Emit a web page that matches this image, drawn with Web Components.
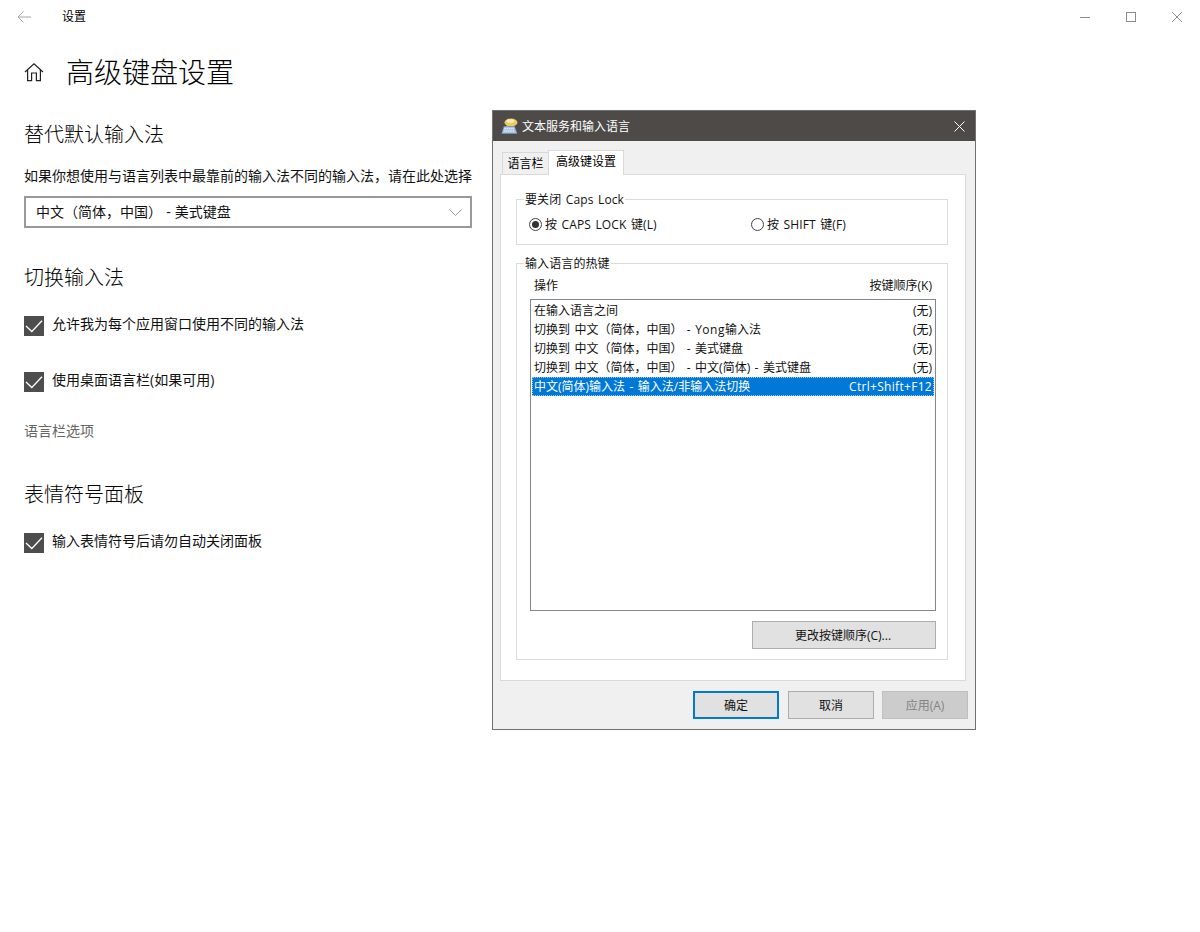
<!DOCTYPE html>
<html lang="zh-CN"><head><meta charset="utf-8"><title>设置</title>
<style>
html,body{margin:0;padding:0;background:#fff;height:932px;overflow:hidden;font-family:"Open Sans","Noto Sans CJK SC",sans-serif;color:#000}
</style></head><body>
<x-settings>
  <x-page-section title="替代默认输入法">
    <x-desc>如果你想使用与语言列表中最靠前的输入法不同的输入法，请在此处选择</x-desc>
    <x-combo>中文（简体，中国） - 美式键盘</x-combo>
  </x-page-section>
  <x-page-section title="切换输入法">
    <x-check>允许我为每个应用窗口使用不同的输入法</x-check>
    <x-check>使用桌面语言栏(如果可用)</x-check>
    <x-link>语言栏选项</x-link>
  </x-page-section>
  <x-page-section title="表情符号面板">
    <x-check>输入表情符号后请勿自动关闭面板</x-check>
  </x-page-section>
</x-settings>
<x-dialog caption="文本服务和输入语言">
  <x-group caption="要关闭 Caps Lock" class="caps">
    <x-radios>
      <x-radio checked style="width:222px">按 CAPS LOCK 键(L)</x-radio>
      <x-radio>按 SHIFT 键(F)</x-radio>
    </x-radios>
  </x-group>
  <x-group caption="输入语言的热键" class="keys">
    <x-hotkeys>
      <x-hotkey action="在输入语言之间" keys="(无)"></x-hotkey>
      <x-hotkey action="切换到 中文（简体，中国） - Yong输入法" keys="(无)"></x-hotkey>
      <x-hotkey action="切换到 中文（简体，中国） - 美式键盘" keys="(无)"></x-hotkey>
      <x-hotkey action="切换到 中文（简体，中国） - 中文(简体) - 美式键盘" keys="(无)"></x-hotkey>
      <x-hotkey selected action="中文(简体)输入法 - 输入法/非输入法切换" keys="Ctrl+Shift+F12"></x-hotkey>
    </x-hotkeys>
    <x-btn class="wide">更改按键顺序(C)...</x-btn>
  </x-group>
</x-dialog>
<script>
const def=(name,html,init)=>{
  const t=document.createElement('template');t.innerHTML=html;
  customElements.define(name,class extends HTMLElement{
    constructor(){super();this.attachShadow({mode:'open'}).appendChild(t.content.cloneNode(true));}
    connectedCallback(){init&&init(this,this.shadowRoot);}
  });
};
const CJK='"Open Sans","Noto Sans CJK SC",sans-serif';

def('x-settings',`<style>
:host{display:block;height:932px;width:1200px;box-sizing:border-box}
.bar{height:33px;display:flex;align-items:center;font-size:12px}
.back{width:48px;display:flex;justify-content:center}
.ttl{margin-left:14px;line-height:33px;color:#000}
.ctl{margin-left:auto;display:flex}
.ctl span{width:46px;height:33px;display:flex;align-items:center;justify-content:center}
.head{display:flex;align-items:center;height:48px;margin-top:15px;padding-left:24px}
h1{font:300 28px/48px ${CJK};margin:0 0 0 22px;color:#000}
.home{width:20px;height:20px;display:block}
main{width:448px;margin-left:24px;padding-top:25px}
</style>
<div class="bar">
  <div class="back"><svg width="16" height="16" viewBox="0 0 16 16" fill="none" stroke="#a6a6a6" stroke-width="1"><path d="M2 8H15M7.500 2.500 2 8l5.500 5.500"/></svg></div>
  <div class="ttl">设置</div>
  <div class="ctl">
    <span><svg width="10" height="10" viewBox="0 0 10 10"><path d="M0 5.500h10" stroke="#8c8c8c" fill="none"/></svg></span>
    <span><svg width="10" height="10" viewBox="0 0 10 10"><rect x=".5" y=".5" width="9" height="9" stroke="#8c8c8c" fill="none"/></svg></span>
    <span><svg width="10" height="10" viewBox="0 0 10 10"><path d="M0 0l10 10M10 0 0 10" stroke="#8c8c8c" fill="none"/></svg></span>
  </div>
</div>
<div class="head">
  <svg class="home" viewBox="0 0 20 20" fill="none" stroke="#222" stroke-width="1.200"><path d="M1 10 10 1.800 19 10M3.600 8v10.600h4v-7.600h4.800v7.600h4V8"/></svg>
  <h1>高级键盘设置</h1>
</div>
<main><slot></slot></main>`);

def('x-page-section',`<style>
:host{display:block;margin-bottom:22px}
h2{font:300 20px/28px ${CJK};margin:0 0 17px;color:#000}
</style><h2></h2><slot></slot>`,(el,s)=>{s.querySelector('h2').textContent=el.getAttribute('title');el.removeAttribute('title');});

def('x-desc',`<style>:host{display:block;font-size:14px;line-height:20px;white-space:nowrap;margin-bottom:10px;color:#111}</style><slot></slot>`);

def('x-combo',`<style>
:host{display:flex;align-items:center;justify-content:space-between;box-sizing:border-box;width:448px;height:32px;border:2px solid #999;padding:0 8px 0 10px;font-size:14px;color:#111;margin-bottom:36px;word-spacing:.5px}
svg{display:block}
.tx{padding-bottom:2px}
</style><span class="tx"><slot></slot></span><svg width="13" height="7" viewBox="0 0 13 7" fill="none" stroke="#999"><path d="M.5.5 6.500 6.500 12.500.5"/></svg>`);

def('x-check',`<style>
:host{display:flex;align-items:center;height:20px;font-size:14px;line-height:20px;gap:8px;color:#111;margin-top:24px;margin-bottom:36px}
.b{width:20px;height:20px;background:#4d4d4d;display:flex;align-items:center;justify-content:center;flex:none}
.tx{padding-bottom:4px}
</style><span class="b"><svg width="20" height="20" viewBox="0 0 20 20" fill="none" stroke="#fff" stroke-width="1.300"><path d="M2 10 7.800 15.500 18 4.800"/></svg></span><span class="tx"><slot></slot></span>`);

def('x-link',`<style>:host{display:block;font-size:14px;line-height:20px;color:#666;margin-top:-7px;margin-bottom:40px}</style><slot></slot>`);

def('x-dialog',`<style>
:host{display:flex;flex-direction:column;position:absolute;left:492px;top:110px;width:484px;height:620px;box-sizing:border-box;border:1px solid #706f6d;background:#f0f0f0;font-size:12px;color:#000}
.t{height:30px;flex:none;background:#4d4a48;color:#fff;display:flex;align-items:center;padding:0 10px 0 8px;font-size:12px;gap:4px}
.t svg.ic{display:block;margin-top:-1px}
.x{margin-left:auto;display:block}
.tabs{display:flex;align-items:flex-end;height:33px;padding:0 0 0 9px;flex:none}
.tab{box-sizing:border-box;border:1px solid #d9d9d9;border-bottom:0;background:#f0f0f0;height:22px;width:47px;display:flex;align-items:center;justify-content:center;line-height:20px}
.tab.on{background:#fff;height:25px;width:76px;margin:0 0 -1px -1px;position:relative;z-index:1;padding-bottom:2px}
.panel{margin:0 9px 0 7px;height:507px;box-sizing:border-box;border:1px solid #d9d9d9;background:#fff;padding:14px 17px 0 15px;flex:none}
.foot{display:flex;justify-content:flex-end;gap:9px;padding:10px 7px 0 0}
.foot x-btn[disabled]{margin-left:-1px}
</style>
<div class="t"><svg class="ic" width="17" height="16" viewBox="0 0 17 16">
  <ellipse cx="10" cy="4.500" rx="6.500" ry="4" fill="#eccb5e"/><ellipse cx="9.500" cy="3" rx="4" ry="1.800" fill="#faeeb0"/><path d="M6 7 5 9.500 9 8z" fill="#eccb5e"/>
  <path d="M3 8.500h10.500l2.500 7H.8z" fill="#a9c4e4" stroke="#7394bb" stroke-width=".6"/><path d="M3.500 10.700h9.500M2.800 13h10.800" stroke="#eef4fb" stroke-width="1" stroke-dasharray="1.500 .7"/></svg>
  <span>文本服务和输入语言</span>
  <svg class="x" width="11" height="11" viewBox="0 0 11 11" fill="none" stroke="#fff"><path d="M.5.500l10 10M10.500.5l-10 10"/></svg></div>
<div class="tabs"><div class="tab">语言栏</div><div class="tab on">高级键设置</div></div>
<div class="panel"><slot></slot></div>
<div class="foot"><x-btn primary>确定</x-btn><x-btn>取消</x-btn><x-btn disabled>应用(A)</x-btn></div>`);

def('x-group',`<style>
:host{display:block}
:host(.caps){height:56px;margin-bottom:8px}
:host(.keys){height:407px}
fieldset{margin:0;padding:0;height:100%;box-sizing:border-box;border:1px solid #dcdcdc;min-width:0;word-spacing:1.300px}
legend{padding:2px 1px 0;margin-left:7px;line-height:18px;color:#111;letter-spacing:.1px}
</style><fieldset><legend></legend><slot></slot></fieldset>`,(el,s)=>{s.querySelector('legend').textContent=el.getAttribute('caption');});

def('x-radios',`<style>:host{display:flex;padding-left:12px;height:18px;margin-top:6px}</style><slot></slot>`);

def('x-radio',`<style>
:host{display:flex;align-items:center;gap:3px;white-space:nowrap;color:#111;letter-spacing:.1px}
i{width:11px;height:11px;border:1px solid #444;border-radius:50%;display:flex;align-items:center;justify-content:center;background:#fff}
b{width:7px;height:7px;border-radius:50%;background:#333;display:none}
:host([checked]) b{display:block}
</style><i><b></b></i><slot></slot>`);

def('x-hotkeys',`<style>
:host{display:block;padding:0 11px 0 13px}
.h{display:flex;justify-content:space-between;height:18px;line-height:18px;padding:4px 4px 0 4px;color:#111}
.l{box-sizing:border-box;height:312px;margin-top:4px;border:1px solid #828790;background:#fff;padding:1px}
</style><div class="h"><span>操作</span><span>按键顺序(K)</span></div><div class="l"><slot></slot></div>`);

def('x-hotkey',`<style>
:host{display:flex;justify-content:space-between;height:19px;line-height:19px;padding:0 2px 0 2px;white-space:pre;color:#111;box-sizing:border-box}
:host([selected]){background:#0078d7;color:#fff;outline:1px dotted #9cc8ee;outline-offset:-1px;padding-right:2px}
:host([selected]) .k{letter-spacing:.3px}
.lat{letter-spacing:.5px}
</style><span class="a"></span><span class="k"></span>`,(el,s)=>{
  const a=s.querySelector('.a');
  el.getAttribute('action').split(/(Yong)/).forEach(p=>{
    if(p==='Yong'){const l=document.createElement('span');l.className='lat';l.textContent=p;a.appendChild(l);}
    else a.appendChild(document.createTextNode(p));
  });
  s.querySelector('.k').textContent=el.getAttribute('keys');
});

def('x-btn',`<style>
:host{display:flex;align-items:center;justify-content:center;box-sizing:border-box;width:86px;height:28px;border:1px solid #adadad;background:#e1e1e1;color:#111;font-size:12px}
:host([primary]){border:2px solid #0078d7}
:host([disabled]){background:#ccc;border-color:#bfbfbf;color:#838383}
:host(.wide){width:184px;margin:10px 11px 0 auto;padding-right:2px}
</style><slot></slot>`);
</script>
</body></html>
